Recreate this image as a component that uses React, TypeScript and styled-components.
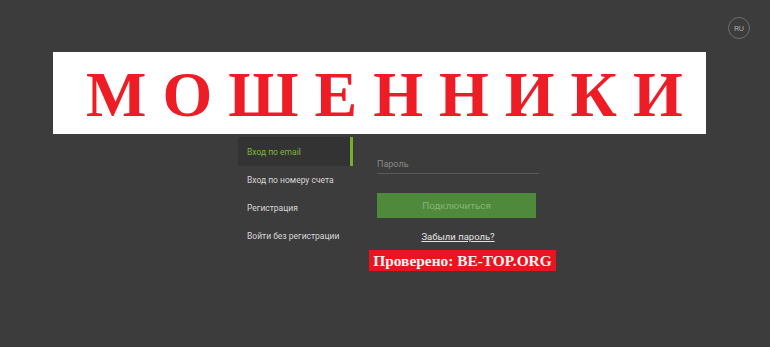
import React, { FC } from "react";
import styled, { createGlobalStyle } from "styled-components";

const GlobalStyle = createGlobalStyle`
  html, body {
    margin: 0;
    padding: 0;
    background: #3c3c3c;
  }
  body {
    font-family: Roboto, "Liberation Sans", Arial, sans-serif;
  }
`;

const Page = styled.div`
  width: 770px;
  height: 347px;
  background-color: #3c3c3c;
  overflow: hidden;
  display: flex;
  flex-direction: column;
`;

const TopBar = styled.div`
  height: 52px;
  box-sizing: border-box;
  padding: 17px 20px 0 0;
  display: flex;
  justify-content: flex-end;
  align-items: flex-start;
`;

const LangButton = styled.div`
  width: 22px;
  height: 22px;
  box-sizing: border-box;
  border: 1px solid #6e6e6e;
  border-radius: 50%;
  display: flex;
  align-items: center;
  justify-content: center;
  color: #a8a8a8;
  font-size: 8px;
`;

const Banner = styled.div`
  margin-left: 53px;
  width: 653px;
  height: 82px;
  background-color: #ffffff;
  display: flex;
  align-items: center;
  box-sizing: border-box;
  padding-left: 33px;
`;

const BannerText = styled.span`
  font-family: "Liberation Serif", "Times New Roman", serif;
  font-weight: bold;
  font-size: 64px;
  line-height: 1;
  letter-spacing: 16px;
  color: #ee1c25;
  margin-top: 4px;
`;

const Main = styled.div`
  margin-top: 3px;
  margin-left: 238px;
  display: flex;
  gap: 24px;
`;

const Menu = styled.div`
  width: 115px;
  display: flex;
  flex-direction: column;
`;

const MenuItem = styled.div<{ $active?: boolean }>`
  height: ${(p) => (p.$active ? 29 : 28)}px;
  box-sizing: border-box;
  display: flex;
  align-items: center;
  padding-left: 9px;
  font-size: 8.5px;
  color: ${(p) => (p.$active ? "#7fb43c" : "#d6d6d6")};
  background-color: ${(p) => (p.$active ? "#333333" : "transparent")};
  border-right: 3px solid ${(p) => (p.$active ? "#73b02c" : "transparent")};
  white-space: nowrap;
`;

const Form = styled.div`
  width: 162px;
  display: flex;
  flex-direction: column;
  align-items: center;
`;

const Field = styled.div`
  width: 100%;
  height: 37px;
  box-sizing: border-box;
  border-bottom: 1px solid #595959;
  display: flex;
  align-items: flex-end;
  padding-bottom: 4px;
  font-size: 9px;
  color: #8a8a8a;
`;

const SubmitButton = styled.div`
  margin-top: 19px;
  width: 159px;
  height: 25px;
  align-self: flex-start;
  background-color: #4f8a3c;
  display: flex;
  align-items: center;
  justify-content: center;
  font-size: 9.8px;
  color: #86b573;
`;

const ForgotLink = styled.a`
  margin-top: 13px;
  font-size: 9.5px;
  color: #e2e2e2;
  text-decoration: underline;
  line-height: 11px;
`;

const Badge = styled.div`
  margin-top: 8px;
  align-self: flex-start;
  margin-left: -8px;
  width: 187px;
  height: 21px;
  background-color: #e8151e;
  display: flex;
  align-items: center;
  justify-content: center;
  font-family: "Liberation Serif", "Times New Roman", serif;
  font-weight: bold;
  font-size: 15.4px;
  color: #fff3f3;
  white-space: nowrap;
`;

const menu = [
  "Вход по email",
  "Вход по номеру счета",
  "Регистрация",
  "Войти без регистрации",
];

const App: FC = () => {
  return (
    <>
      <GlobalStyle />
      <Page>
        <TopBar>
          <LangButton>RU</LangButton>
        </TopBar>
        <Banner>
          <BannerText>МОШЕННИКИ</BannerText>
        </Banner>
        <Main>
          <Menu>
            {menu.map((item, idx) => (
              <MenuItem key={item} $active={idx === 0}>
                {item}
              </MenuItem>
            ))}
          </Menu>
          <Form>
            <Field>Пароль</Field>
            <SubmitButton>Подключиться</SubmitButton>
            <ForgotLink>Забыли пароль?</ForgotLink>
            <Badge>Проверено: BE-TOP.ORG</Badge>
          </Form>
        </Main>
      </Page>
    </>
  );
};

export default App;
